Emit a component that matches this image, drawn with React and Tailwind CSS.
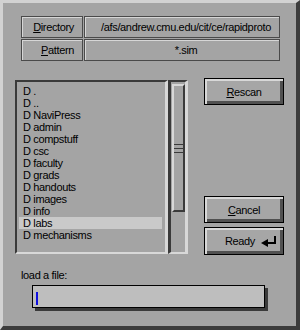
import React from "react";

const items = [
  ".",
  "..",
  "NaviPress",
  "admin",
  "compstuff",
  "csc",
  "faculty",
  "grads",
  "handouts",
  "images",
  "info",
  "labs",
  "mechanisms",
];

function Cell({ children, className = "" }) {
  return (
    <div
      className={`h-[22px] flex items-center border border-[#4a4a4a] shadow-[inset_1px_1px_0_#d6d6d6] ${className}`}
    >
      {children}
    </div>
  );
}

function Button({ children, className = "" }) {
  return (
    <div
      className={`w-[80px] border border-black bg-[#a6a6a6] shadow-[inset_2px_2px_0_#d8d8d8,inset_-3px_-3px_0_#505050] flex items-center justify-center ${className}`}
    >
      {children}
    </div>
  );
}

export default function App() {
  return (
    <div className="w-[300px] h-[330px] bg-[#a4a4a4] border-l-[3px] border-t-[3px] border-r-[4px] border-b-[4px] border-l-[#d2d2d2] border-t-[#d2d2d2] border-r-[#3c3c3c] border-b-[#3c3c3c] font-['Liberation_Sans',Arial,sans-serif] text-[11px] tracking-[-0.35px] text-black leading-[14px]">
      {/* Directory / Pattern table */}
      <div className="mt-[13px] ml-[18px] w-[259px] grid grid-cols-[62px_1fr] gap-[1px]">
        <Cell className="justify-end pr-[8px]">
          <span>
            <span className="underline">D</span>irectory
          </span>
        </Cell>
        <Cell className="justify-center pl-[8px]">/afs/andrew.cmu.edu/cit/ce/rapidproto</Cell>
        <Cell className="justify-end pr-[8px]">
          <span>
            <span className="underline">P</span>attern
          </span>
        </Cell>
        <Cell className="justify-center pl-[8px]">*.sim</Cell>
      </div>

      {/* List + scrollbar + buttons */}
      <div className="mt-[19px] ml-[12px] flex items-start">
        <div className="w-[153px] h-[174px] border-t-2 border-l-2 border-b-2 border-r-[3px] border-t-[#3a3a3a] border-l-[#3a3a3a] border-b-[#d8d8d8] border-r-[#d8d8d8] pt-[3px]">
          {items.map((name) => (
            <div
              key={name}
              className={`h-[12px] leading-[12px] ml-[2px] mr-[3px] pl-[4px] whitespace-nowrap ${
                name === "labs" ? "bg-[#c9c9c9]" : ""
              }`}
            >
              D {name}
            </div>
          ))}
        </div>

        <div className="w-[20px] h-[174px] border-t-2 border-l-[3px] border-b-2 border-r-[3px] border-t-[#3a3a3a] border-l-[#3a3a3a] border-b-[#d8d8d8] border-r-[#d8d8d8] pt-[2px] pl-[1px]">
          <div className="w-[13px] h-[128px] border-t-2 border-l-2 border-b-2 border-r-2 border-t-[#d8d8d8] border-l-[#d8d8d8] border-b-[#3a3a3a] border-r-[#3a3a3a] flex flex-col items-center justify-center gap-[3px]">
            <div className="w-[9px] h-[1px] bg-[#3a3a3a]" />
            <div className="w-[9px] h-[1px] bg-[#3a3a3a]" />
            <div className="w-[9px] h-[1px] bg-[#3a3a3a]" />
          </div>
        </div>

        <div className="ml-[16px] -mt-[2px] flex flex-col">
          <Button className="h-[27px]">
            <span>
              <span className="underline">R</span>escan
            </span>
          </Button>
          <Button className="h-[27px] mt-[91px]">
            <span>
              <span className="underline">C</span>ancel
            </span>
          </Button>
          <Button className="h-[28px] mt-[4px] justify-end pr-[6px] gap-[6px]">
            <span>Ready</span>
            <svg width="16" height="12" viewBox="0 0 16 12">
              <polygon points="0,8 7,4 7,12" fill="#000" />
              <rect x="6" y="7" width="9" height="2" fill="#000" />
              <rect x="13" y="1" width="2" height="8" fill="#000" />
            </svg>
          </Button>
        </div>
      </div>

      {/* Load a file */}
      <div className="mt-[13px] ml-[18px]">load a file:</div>
      <div className="mt-[3px] ml-[29px] w-[233px] h-[23px] border border-black bg-[#bebebe] shadow-[3px_3px_0_#3a3a3a] pt-[6px] pl-[3px]">
        <div className="w-[2px] h-[13px] bg-[#1010e0]" />
      </div>
    </div>
  );
}
